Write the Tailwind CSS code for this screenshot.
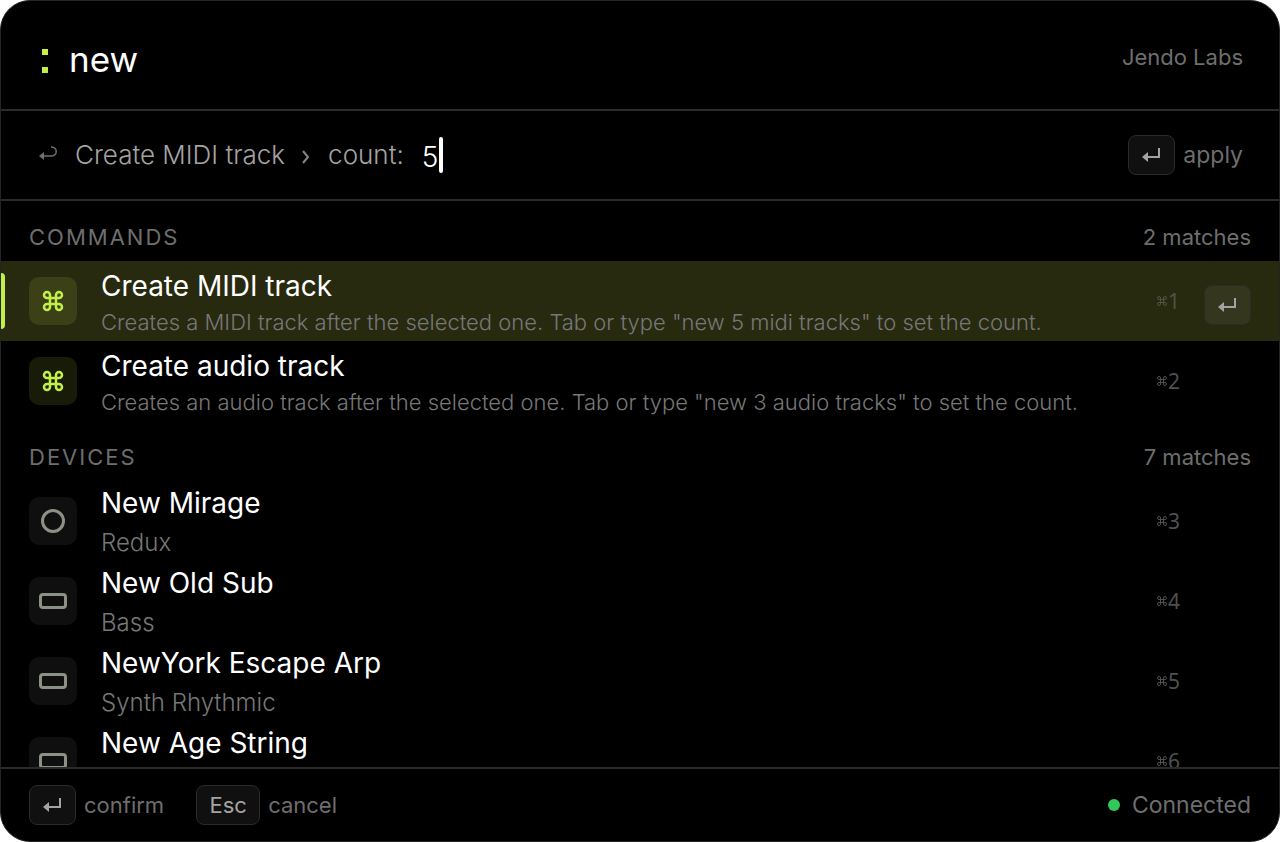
<!DOCTYPE html>
<html lang="en">
<head>
<meta charset="utf-8">
<meta name="viewport" content="width=device-width, initial-scale=1">
<title>Command palette</title>
<script src="https://cdn.jsdelivr.net/npm/@tailwindcss/browser@4"></script>
</head>
<body class="bg-white font-['Inter',sans-serif]">
<svg class="hidden" aria-hidden="true">
  <symbol id="enter" viewBox="0 0 20 16"><path d="M17 1v9H6" fill="none" stroke="currentColor" stroke-width="2"/><path d="M0 10 6 5v10z" fill="currentColor"/></symbol>
  <symbol id="cmd" viewBox="0 0 24 24"><path d="M15 6v12a3 3 0 1 0 3-3H6a3 3 0 1 0 3 3V6a3 3 0 1 0-3 3h12a3 3 0 1 0-3-3" fill="none" stroke="currentColor" stroke-width="2.500"/></symbol>
  <symbol id="cmdthin" viewBox="0 0 24 24"><path d="M15 6v12a3 3 0 1 0 3-3H6a3 3 0 1 0 3 3V6a3 3 0 1 0-3 3h12a3 3 0 1 0-3-3" fill="none" stroke="currentColor" stroke-width="2"/></symbol>
</svg>
<main class="flex h-screen flex-col overflow-hidden rounded-[30px] border border-[#242424] bg-black">
  <header class="flex h-[110px] shrink-0 items-center border-b-2 border-[#2b2b2b] px-9">
    <label for="query" class="flex w-8 flex-col gap-3 pl-[5px] pt-3"><span class="size-[6px] bg-[#c3ef4a]"></span><span class="size-[6px] bg-[#c3ef4a]"></span><span class="sr-only">Command</span></label>
    <input id="query" value="new" class="mt-2 h-12 min-w-0 flex-1 bg-transparent text-[35px] leading-12 text-white outline-none">
    <span class="mt-1 text-[22px] leading-8 text-[#6e6e6e]">Jendo Labs</span>
  </header>
  <form class="flex h-[90px] shrink-0 items-center border-b-2 border-[#2b2b2b] px-9 text-[26px] font-light text-[#a3a3a3]">
    <svg class="mr-4 mb-1 h-4 w-[22px] text-[#707070]" viewBox="0 0 22 16" aria-hidden="true"><path d="M14 2c7 0 7 9 0 9H6" fill="none" stroke="currentColor" stroke-width="1.500"/><path d="M2 11l5-4v8z" fill="currentColor"/></svg>
    <span class="leading-9">Create MIDI track</span>
    <svg class="ml-4 mr-[17px] mt-1 h-[14px] w-[10px] text-[#858585]" viewBox="0 0 10 14" aria-hidden="true"><path d="M2 1l5 6-5 6" fill="none" stroke="currentColor" stroke-width="2"/></svg>
    <label for="count" class="leading-9">count:</label>
    <input id="count" value="5" class="ml-[18px] mt-1 h-10 w-[17px] bg-transparent text-[28px] leading-10 text-white outline-none">
    <span class="h-9 w-1 rounded-sm bg-white"></span>
    <button class="ml-auto flex items-center gap-2 text-[23px] font-normal text-[#6e6e6e]"><kbd class="flex h-10 w-[47px] items-center justify-center rounded-lg border border-[#2a2a2a] bg-[#101010] text-[#a3a3a3]"><svg class="h-4 w-5"><use href="#enter"/></svg></kbd>apply</button>
  </form>
  <div class="min-h-0 flex-1 overflow-hidden">
    <section>
      <div class="flex h-[60px] items-center justify-between px-7 pt-3 text-[22px] text-[#6e6e6e]"><h2 class="tracking-[2px]">COMMANDS</h2><span>2 matches</span></div>
      <ul>
        <li class="relative flex h-20 items-center bg-[#282a10] px-7">
          <span class="absolute left-0 top-3 h-14 w-1 rounded-r bg-[#c3ef4a]"></span>
          <span class="mr-6 flex size-12 items-center justify-center rounded-[10px] bg-[#3b4016] text-[#c3ef4a]"><svg class="size-6"><use href="#cmd"/></svg></span>
          <div class="flex-1 whitespace-nowrap pt-[6px]"><p class="text-[28px] leading-9 text-white">Create MIDI track</p><p class="text-[22px] leading-9 font-light text-[#777]">Creates a MIDI track after the selected one. Tab or type "new 5 midi tracks" to set the count.</p></div>
          <span class="mr-6 flex items-center text-[#515340]"><svg class="size-3"><use href="#cmdthin"/></svg><span class="font-['Noto_Sans',sans-serif] text-[21px] leading-8">1</span></span>
          <button aria-label="Run command" class="mt-2 flex h-10 w-[47px] items-center justify-center rounded-lg border border-[#2b2b2b] bg-[#34361e] text-[#a3a3a3]"><svg class="h-4 w-5"><use href="#enter"/></svg></button>
        </li>
        <li class="flex h-20 items-center px-7">
          <span class="mr-6 flex size-12 items-center justify-center rounded-[10px] bg-[#171b08] text-[#c3ef4a]"><svg class="size-6"><use href="#cmd"/></svg></span>
          <div class="flex-1 whitespace-nowrap pt-[6px]"><p class="text-[28px] leading-9 text-white">Create audio track</p><p class="text-[22px] leading-9 font-light text-[#777]">Creates an audio track after the selected one. Tab or type "new 3 audio tracks" to set the count.</p></div>
          <span class="mr-[71px] flex items-center text-[#505050]"><svg class="size-3"><use href="#cmdthin"/></svg><span class="font-['Noto_Sans',sans-serif] text-[21px] leading-8">2</span></span>
        </li>
      </ul>
    </section>
    <section>
      <div class="flex h-[60px] items-center justify-between px-7 pt-3 text-[22px] text-[#6e6e6e]"><h2 class="tracking-[2px]">DEVICES</h2><span>7 matches</span></div>
      <ul>
        <li class="flex h-20 items-center px-7">
          <span class="mr-6 flex size-12 items-center justify-center rounded-[10px] bg-[#0f0f0f]"><span class="size-6 rounded-full border-3 border-[#8c9186]"></span></span>
          <div class="flex-1 whitespace-nowrap pt-1"><p class="text-[28px] leading-10 text-white">New Mirage</p><p class="text-[24px] leading-10 font-light text-[#777]">Redux</p></div>
          <span class="mr-[71px] flex items-center text-[#505050]"><svg class="size-3"><use href="#cmdthin"/></svg><span class="font-['Noto_Sans',sans-serif] text-[21px] leading-8">3</span></span>
        </li>
        <li class="flex h-20 items-center px-7">
          <span class="mr-6 flex size-12 items-center justify-center rounded-[10px] bg-[#0f0f0f]"><span class="h-4 w-7 rounded border-3 border-[#8c9186]"></span></span>
          <div class="flex-1 whitespace-nowrap pt-1"><p class="text-[28px] leading-10 text-white">New Old Sub</p><p class="text-[24px] leading-10 font-light text-[#777]">Bass</p></div>
          <span class="mr-[71px] flex items-center text-[#505050]"><svg class="size-3"><use href="#cmdthin"/></svg><span class="font-['Noto_Sans',sans-serif] text-[21px] leading-8">4</span></span>
        </li>
        <li class="flex h-20 items-center px-7">
          <span class="mr-6 flex size-12 items-center justify-center rounded-[10px] bg-[#0f0f0f]"><span class="h-4 w-7 rounded border-3 border-[#8c9186]"></span></span>
          <div class="flex-1 whitespace-nowrap pt-1"><p class="text-[28px] leading-10 text-white">NewYork Escape Arp</p><p class="text-[24px] leading-10 font-light text-[#777]">Synth Rhythmic</p></div>
          <span class="mr-[71px] flex items-center text-[#505050]"><svg class="size-3"><use href="#cmdthin"/></svg><span class="font-['Noto_Sans',sans-serif] text-[21px] leading-8">5</span></span>
        </li>
        <li class="flex h-20 items-center px-7">
          <span class="mr-6 flex size-12 items-center justify-center rounded-[10px] bg-[#0f0f0f]"><span class="h-4 w-7 rounded border-3 border-[#8c9186]"></span></span>
          <div class="flex-1 self-start whitespace-nowrap pt-[2px]"><p class="text-[28px] leading-10 text-white">New Age String</p></div>
          <span class="mr-[71px] flex items-center text-[#505050]"><svg class="size-3"><use href="#cmdthin"/></svg><span class="font-['Noto_Sans',sans-serif] text-[21px] leading-8">6</span></span>
        </li>
      </ul>
    </section>
  </div>
  <footer class="flex h-[74px] shrink-0 items-center border-t-2 border-[#2b2b2b] px-7 text-[22px] text-[#6e6e6e]">
    <button class="flex items-center gap-2"><kbd class="flex h-10 w-[47px] items-center justify-center rounded-lg border border-[#2a2a2a] bg-[#101010] text-[#a3a3a3]"><svg class="h-4 w-5"><use href="#enter"/></svg></kbd>confirm</button>
    <button class="ml-8 flex items-center gap-2"><kbd class="flex h-10 w-16 items-center justify-center rounded-lg border border-[#2a2a2a] bg-[#101010] font-['Inter',sans-serif] text-[#a3a3a3]">Esc</kbd>cancel</button>
    <p class="ml-auto flex items-center gap-3 text-[23px]"><span class="size-3 rounded-full bg-[#34c759]"></span>Connected</p>
  </footer>
</main>
</body>
</html>
